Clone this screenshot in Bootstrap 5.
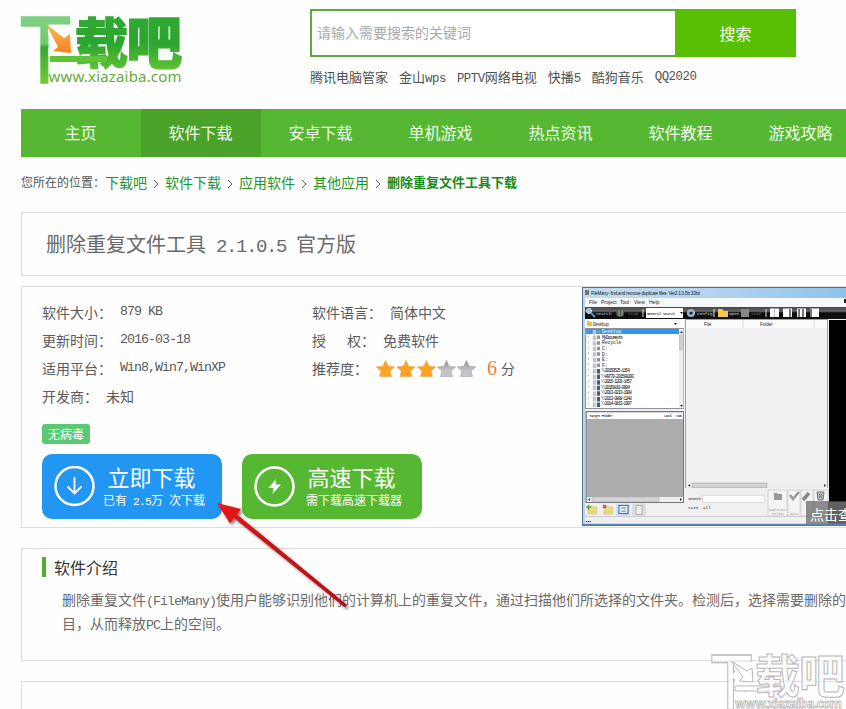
<!DOCTYPE html>
<html lang="zh-CN">
<head>
<meta charset="utf-8">
<meta name="viewport" content="width=device-width, initial-scale=1">
<title>删除重复文件工具下载</title>
<link href="https://cdn.jsdelivr.net/npm/bootstrap@5.3.0/dist/css/bootstrap.min.css" rel="stylesheet">
<style>
  body{font-family:"Noto Sans CJK SC",sans-serif;font-size:14px;color:#5a5a5a;background:#fefefe;overflow:hidden;height:709px}
  .page{padding-left:21px;height:709px;overflow:hidden}
  /* half-width latin, 0.5em per character */
  .hw{font-family:"Liberation Mono",monospace;font-size:.95em;letter-spacing:-.0737em;white-space:pre;line-height:1}
  .facts .d-flex>.hw{line-height:28px}
  .top-area{height:109px}
  .logo{width:289px}
  .search{width:486px;height:48px;margin-top:9px}
  .search .form-control{border:2px solid #5aa943;border-right:0;padding:0 5px 2px;font-size:14px;background:#fff}
  .search .form-control::placeholder{color:#a9a9a9}
  .search .btn{width:121px;background:#58bf03;color:#f4fff0;font-size:16px;padding:0;border:0}
  .hot{font-size:13px;line-height:20px;margin-top:10px;color:#505050;gap:11px}
  .hot .hw{letter-spacing:-.037em}
  .hot>.hw{line-height:20px}
  .main-nav{background:#56b832;height:48px;overflow:hidden}
  .main-nav .nav-link{width:120px;flex:none;height:48px;line-height:47px;padding:0 1px 0 0;text-align:center;color:#f0fdea;font-size:16px}
  .main-nav .nav-link.active{background:#4aa229}
  .crumbs{height:55px;line-height:20px;padding-top:15px;font-size:14px;color:#259427}
  .crumbs .where{font-size:12px;width:84px;color:#555;white-space:nowrap}
  .crumbs svg{width:18px;height:20px;flex:none}
  .crumbs b{font-size:13px;color:#168a1a}
  .panel{border:1px solid #ddd;border-right:0}
  .title-box{height:64px;margin-bottom:10px;padding-left:24px;font-size:20px;color:#6a6a6a;line-height:62px;font-weight:400}
  .info{height:242px;margin-bottom:20px;padding-left:20px}
  .facts{height:137px;padding-top:11px;line-height:28px}
  .facts .left{width:270px}
  .lbl{width:78px;flex:none}
  .safe{width:48px;height:20px;line-height:19px;background:#5bc873;border-radius:3px;color:#fff;font-size:12px;text-align:center;padding:0;font-weight:400}
  .actions{margin-top:10px;gap:20px}
  .dl{width:180px;height:65px;border-radius:10px;border:0;padding:0 0 0 12px;color:#fff;text-align:left;background:#2196f3}
  .dl.fast{background:#56b732}
  .dl:hover{color:#fff}
  .dl .big{font-size:22px;line-height:26px;margin:-2px 0 2px -5px}
  .dl .sub{font-size:12px;line-height:18px}
  .dl .cap{width:106px;text-align:center;margin-left:6px}
  .intro{height:113px;margin-bottom:20px;padding:8px 0 0 20px}
  .intro h2{font-size:16px;font-weight:400;color:#333;border-left:4px solid #52ae30;padding-left:8px;line-height:20px;height:20px;margin-bottom:10px}
  .intro p{padding-left:20px;line-height:24px;color:#6a6a6a;white-space:nowrap;margin:0}
  .last{height:60px}
  .over{position:absolute;pointer-events:none}
  .arrow{left:200px;top:490px}
  .stamp{left:706px;top:646px}
  .score{font-family:"Liberation Serif",serif;font-size:20px;color:#f08038;margin-left:9px;width:14px}
</style>
</head>
<body>
<div class="page">
  <header class="top-area d-flex">
    <div class="logo">
      <svg width="180" height="95" viewBox="21 0 180 95" overflow="visible" role="img" aria-label="下载吧">
        <defs>
          <linearGradient id="ga" x1="0" y1="0" x2="0" y2="1"><stop offset="0" stop-color="#97d5a0"/><stop offset=".5" stop-color="#6cca6c"/><stop offset=".53" stop-color="#34aa30"/><stop offset="1" stop-color="#8ad838"/></linearGradient>
          <linearGradient id="gb" x1="0" y1="0" x2="0" y2="1"><stop offset="0" stop-color="#36ad38"/><stop offset=".55" stop-color="#2aa52d"/><stop offset="1" stop-color="#70cc36"/></linearGradient>
          <linearGradient id="gc" x1="0" y1="0" x2="0" y2="1"><stop offset="0" stop-color="#fbb75b"/><stop offset="1" stop-color="#f5831f"/></linearGradient>
        </defs>
        <g font-family="Noto Sans CJK SC, sans-serif" font-weight="700" font-size="54">
          <text transform="translate(18.500 76) scale(1 1.38)" fill="url(#ga)" stroke="url(#ga)" stroke-width="1">下</text>
          <path d="M48.500 24.500V56H74V24.500Z" fill="#fefefe"/>
          <text transform="translate(75 63) scale(.98 1)" fill="url(#gb)" stroke="url(#gb)" stroke-width="2.200">载</text>
          <text transform="translate(127 62.500) scale(1.01 1.03)" fill="url(#gb)" stroke="url(#gb)" stroke-width="3">吧</text>
        </g>
        <path d="M46 24 64 38 70 34 71 53 53 51 58 47Z" fill="url(#gc)"/>
        <path d="M50 56H107V62H50Z" fill="#5ec337"/>
        <text x="48.500" y="82" font-family="Noto Sans, sans-serif" font-size="15" textLength="133" fill="#66ad36">www.xiazaiba.com</text>
      </svg>
    </div>
    <div>
      <form class="search input-group flex-nowrap" onsubmit="return false">
        <input class="form-control rounded-0 shadow-none" type="text" placeholder="请输入需要搜索的关键词" aria-label="搜索">
        <button class="btn rounded-0" type="button">搜索</button>
      </form>
      <div class="hot d-flex text-nowrap">
        <span>腾讯电脑管家</span><span>金山<span class="hw">wps</span></span><span><span class="hw">PPTV</span>网络电视</span><span>快播<span class="hw">5</span></span><span>酷狗音乐</span><span class="hw">QQ2020</span>
      </div>
    </div>
  </header>

  <nav class="main-nav nav flex-nowrap">
    <a class="nav-link">主页</a><a class="nav-link active">软件下载</a><a class="nav-link">安卓下载</a><a class="nav-link">单机游戏</a><a class="nav-link">热点资讯</a><a class="nav-link">软件教程</a><a class="nav-link">游戏攻略</a>
  </nav>

  <div class="crumbs d-flex text-nowrap">
    <span class="where">您所在的位置：</span><span>下载吧</span>
    <svg><path d="M7 8 11 12 7 16" fill="none" stroke="#666"/></svg><span>软件下载</span>
    <svg><path d="M7 8 11 12 7 16" fill="none" stroke="#666"/></svg><span>应用软件</span>
    <svg><path d="M7 8 11 12 7 16" fill="none" stroke="#666"/></svg><span>其他应用</span>
    <svg><path d="M7 8 11 12 7 16" fill="none" stroke="#666"/></svg><b>删除重复文件工具下载</b>
  </div>

  <h1 class="panel title-box">删除重复文件工具<span class="hw"> 2.1.0.5 </span>官方版</h1>

  <section class="panel info d-flex">
    <div class="flex-shrink-0">
      <div class="facts d-flex">
        <div class="left">
          <div class="d-flex"><span class="lbl">软件大小：</span><span class="hw">879 KB</span></div>
          <div class="d-flex"><span class="lbl">更新时间：</span><span class="hw">2016-03-18</span></div>
          <div class="d-flex"><span class="lbl">适用平台：</span><span class="hw">Win8,Win7,WinXP</span></div>
          <div class="d-flex"><span class="me-2">开发商：</span><span>未知</span></div>
        </div>
        <div>
          <div class="d-flex"><span class="lbl">软件语言：</span><span>简体中文</span></div>
          <div class="d-flex"><span>授<span class="hw">   </span>权：</span><span class="ms-2">免费软件</span></div>
          <div class="d-flex"><span class="me-2">推荐度：</span>
            <svg width="102" height="28" viewBox="0 0 102 28">
              <defs><path id="st" d="M0-9 2.7-3.3 9.2-2.6 4.6 1.6 6 7H-6L-4.6 1.6-9.2-2.6-2.7-3.3Z"/>
              <linearGradient id="gg" x1="0" y1="0" x2="0" y2="1"><stop offset="0" stop-color="#8c8c92"/><stop offset=".6" stop-color="#c4c4c8"/></linearGradient></defs>
              <g fill="#fba424" stroke="#e99a3a" stroke-width=".5"><use href="#st" x="9.500" y="15.500"/><use href="#st" x="30" y="15.500"/><use href="#st" x="50.500" y="15.500"/></g>
              <g fill="url(#gg)" stroke="#999" stroke-width=".5"><use href="#st" x="70.500" y="15.500"/><use href="#st" x="90.500" y="15.500"/></g>
            </svg>
            <span class="score">6</span><span>分</span></div>
        </div>
      </div>
      <div class="badge safe d-block">无病毒</div>
      <div class="actions d-flex">
        <button class="btn dl d-flex align-items-center">
          <svg width="41" height="41" viewBox="0 0 41 41" fill="none" stroke="#fff"><circle cx="20.500" cy="20" r="19" stroke-width="2.500"/><path d="M20.500 11V27M13.500 20.500 20.500 27.500 27.500 20.500" stroke-width="1.800"/></svg>
          <span class="cap"><span class="big d-block">立即下载</span><span class="sub d-block">已有<span class="hw"> 2.5</span>万<span class="hw"> </span>次下载</span></span>
        </button>
        <button class="btn dl fast d-flex align-items-center">
          <svg width="41" height="41" viewBox="0 0 41 41"><circle cx="20.500" cy="20.500" r="19" fill="none" stroke="#fff" stroke-width="2.500"/><path d="M22 13 14.500 22H19.500L18.500 28 27 18.500H21.500Z" fill="#fff"/></svg>
          <span class="cap"><span class="big d-block">高速下载</span><span class="sub d-block">需下载高速下载器</span></span>
        </button>
      </div>
    </div>
    <svg class="ms-auto flex-shrink-0" width="264" height="240" viewBox="582 287 264 240" font-family="Liberation Mono, monospace">
      <defs>
        <linearGradient id="tb" x1="0" x2="1"><stop offset="0" stop-color="#c5dcf3"/><stop offset=".5" stop-color="#b3d3ef"/><stop offset="1" stop-color="#8fc3ea"/></linearGradient>
        <linearGradient id="bk" x1="0" y1="0" x2="0" y2="1"><stop offset="0" stop-color="#444"/><stop offset=".35" stop-color="#666"/><stop offset=".5" stop-color="#090909"/><stop offset="1" stop-color="#111"/></linearGradient>
      </defs>
      <rect x="582.500" y="287.500" width="270" height="238" fill="#b9d4ee" stroke="#5b7188"/>
      <rect x="583" y="288" width="263" height="10" fill="url(#tb)"/>
      <rect x="585" y="290" width="4" height="5" fill="#777"/>
      <text x="591" y="294.500" font-family="Liberation Sans, sans-serif" font-size="4.700" textLength="109" fill="#222">FileMany -find and remove duplicate files- Ver2.1.0.5b 32bit</text>
      <rect x="585" y="298" width="261" height="226" fill="#f0eff1"/>
      <rect x="585" y="298" width="261" height="9" fill="#f7f8fb"/>
      <g font-family="Liberation Sans, sans-serif" font-size="5" fill="#222"><text x="589" y="304">File</text><text x="601" y="304">Project</text><text x="620" y="304">Tool</text><text x="634" y="304">View</text><text x="649" y="304">Help</text></g>
      <path d="M845 299V303" stroke="#222" stroke-width="2"/>
      <rect x="585" y="307" width="261" height="12" fill="url(#bk)"/>
      <circle cx="589" cy="311" r="2.500" fill="#8bc4ee" stroke="#ddd"/><path d="M591 313 595 317" stroke="#469ee0" stroke-width="2"/>
      <g font-size="4.300" fill="#ddd"><text x="596" y="315">Search</text><text x="628" y="315" fill="#777">Stop</text><text x="697" y="315">Config</text><text x="729" y="315">Open</text><text x="751" y="315" fill="#777">Save</text></g>
      <circle cx="620" cy="313" r="4" fill="#555"/><path d="M619 310V316M622 310V316" stroke="#aaa"/>
      <path d="M643 309V317M714 309V317M766 309V317" stroke="#ddd"/>
      <rect x="646" y="308" width="37" height="10" fill="#fff"/><text x="647" y="315" font-size="4.300" textLength="28" fill="#111">General search</text><path d="M680 312H683L681.500 314Z" fill="#111"/>
      <circle cx="691" cy="313" r="2.800" fill="none" stroke="#9ab2d1" stroke-width="2.500"/>
      <path d="M718 309H722L724 311H728V317H718Z" fill="#f4c84e"/><rect x="741" y="309" width="8" height="8" fill="#888"/>
      <g fill="#fff"><rect x="770" y="308.500" width="9" height="8.500"/><rect x="783" y="308.500" width="9" height="8.500"/><rect x="797" y="308.500" width="9" height="8.500"/><rect x="810" y="308.500" width="9" height="8.500"/></g>
      <path d="M774.500 309V317" stroke="#bbb"/><path d="M790 309V317M799 309V317M803 309V317M811 309V317" stroke="#777" stroke-width="2"/>
      <rect x="585" y="319" width="99" height="9" fill="#fff"/><path d="M587 321H590V322H592V326H587Z" fill="#eebc43"/><text x="593" y="325.500" font-size="4.500" textLength="16" fill="#222">Desktop</text><path d="M674 323H677L675.500 325Z" fill="#111"/>
      <rect x="585.500" y="328.500" width="98" height="80" fill="#fff" stroke="#8e9299"/>
      <rect x="586" y="329" width="93" height="5" fill="#2c98f5"/>
      <rect x="679" y="329" width="4.500" height="79" fill="#eee"/><rect x="679.500" y="335" width="4" height="15" fill="#d0d0d3" stroke="#aaa" stroke-width=".5"/>
      <path d="M680 333 681.500 331 683 333M680 405 681.500 407 683 405" fill="#333"/>
      <path d="M588.500 330V408" stroke="#aaa" stroke-width="1" stroke-dasharray="1.500 4.100"/>
      <path d="M594.500 330V408" stroke="#c5c5c5" stroke-width="3.500" stroke-dasharray="4.500 1.080"/>
      <path d="M598.500 369V408" stroke="#3c5d91" stroke-width="3" stroke-dasharray="4.500 1.080"/>
      <path d="M598.500 330V368" stroke="#8795a3" stroke-width="3" stroke-dasharray="3.500 2.080"/>
      <g font-size="4.600" fill="#111">
        <text x="602" y="333.200" fill="#fff">Desktop</text><text x="602" y="338.800" textLength="21">MyDocuments</text><text x="602" y="344.400">Recycle</text><text x="602" y="350">C:</text><text x="602" y="355.600">D:</text><text x="602" y="361.200">E:</text><text x="602" y="366.700">F:</text>
        <text x="601" y="372.200" textLength="29">\\20150525-1154</text><text x="601" y="377.700" textLength="33">\\49770-201508200</text><text x="601" y="383.200" textLength="31">\\2015-1203-1657</text><text x="601" y="388.700" textLength="29">\\20150810-0904</text><text x="601" y="394.200" textLength="31">\\2013-0213-1908</text><text x="601" y="399.700" textLength="31">\\2013-0808-1248</text><text x="601" y="405.200" textLength="31">\\2014-0813-1907</text>
      </g>
      <rect x="586" y="411.500" width="97.500" height="91" fill="#adacad" stroke="#777"/><rect x="587" y="412.500" width="96" height="6.500" fill="#fff"/>
      <g font-size="4.300" fill="#111"><text x="589" y="417" textLength="24">Target Folder</text><text x="664" y="417" textLength="8">Lock</text><text x="676" y="417" textLength="6">Sub</text></g>
      <rect x="587" y="497" width="96" height="5" fill="#eee"/><rect x="592" y="497" width="67" height="4.500" fill="#d4d4d6" stroke="#aaa" stroke-width=".5"/><path d="M590 498V501L588 499.500ZM680 498V501L682 499.500Z" fill="#333"/>
      <rect x="685.500" y="319.500" width="142" height="168" fill="#f0eff1" stroke="#a2a2a5"/>
      <rect x="686" y="320" width="141" height="8" fill="#fbfbfc"/>
      <g font-size="4.500" fill="#222" font-family="Liberation Sans, sans-serif"><text x="704" y="326">File</text><text x="760" y="326">Folder</text></g><path d="M743 320V328M814 320V328" stroke="#ddd"/>
      <rect x="686" y="483" width="141" height="5" fill="#eee"/><rect x="692" y="483" width="75" height="4.500" fill="#d2d2d5" stroke="#999" stroke-width=".5"/><path d="M690 484V487L688 485.500ZM824 484V487L826 485.500Z" fill="#333"/>
      <rect x="829" y="320" width="17" height="182" fill="#000"/>
      <g font-size="4.300" fill="#222"><text x="688" y="500" textLength="13">Search</text><text x="688" y="509">Size</text><text x="703" y="509">all</text></g>
      <rect x="702.500" y="495.500" width="62" height="7" fill="#fff" stroke="#ccc" stroke-width=".6"/>
      <g fill="#f4f4f5" stroke="#c5c5c7" stroke-width=".7"><rect x="768" y="490" width="19" height="26"/><rect x="788" y="490" width="12" height="26"/><rect x="801" y="490" width="12" height="26"/><rect x="814" y="490" width="14" height="26"/></g>
      <path d="M774 493H777L778 494H782V500H774Z" fill="#999"/><path d="M790 495 793 499 799 492" fill="none" stroke="#999" stroke-width="2.500"/><path d="M803 500 809 493" stroke="#888" stroke-width="3.500"/><path d="M817 492H824L823 500H818Z" fill="#bbb" stroke="#777"/><path d="M819 494 822 498M822 494 819 498" stroke="#777"/>
      <g font-size="3.500" fill="#999"><text x="769" y="510.500" textLength="17">Duplicate</text><text x="772" y="515">Folder</text><text x="790" y="515">Auto</text></g>
      <path d="M588 506H592L593 507H597V514H588ZM604 506H608L609 507H613V514H604Z" fill="#ebd77c" stroke="#c8b96f" stroke-width=".5"/><path d="M586 507H591M588.500 505V510" stroke="#58a63b" stroke-width="1.500"/><path d="M603 505 606 508M606 505 603 508" stroke="#d6482d" stroke-width="1.500"/><rect x="616" y="503.500" width="14" height="13" fill="#cfe1f5"/><rect x="619" y="505.500" width="9" height="8" fill="#fff" stroke="#3574bb" stroke-width="1.200"/><path d="M621 508H626M621 511H626" stroke="#3574bb"/><rect x="632" y="503.500" width="14" height="13" fill="#ddd"/><rect x="636" y="505.500" width="6" height="9" fill="#eee" stroke="#999" stroke-width=".7"/>
      <path d="M585 516.500H827" stroke="#ccc"/><path d="M586 521.500H591" stroke="#222" stroke-dasharray="1.300 .6"/>
      <rect x="828" y="502" width="18" height="22" fill="#777"/>
      <rect x="806" y="501" width="40" height="24" fill="#555" fill-opacity=".65"/>
      <text x="810" y="520" font-family="Noto Sans CJK SC, sans-serif" font-size="14" fill="#fff">点击查</text>
      <path d="M583 524.500H846" stroke="#5f87b4" stroke-width="1.500"/>
    </svg>
  </section>

  <section class="panel intro">
    <h2>软件介绍</h2>
    <p>删除重复文件<span class="hw">(FileMany)</span>使用户能够识别他们的计算机上的重复文件，通过扫描他们所选择的文件夹。检测后，选择需要删除的<br>目，从而释放<span class="hw">PC</span>上的空间。</p>
  </section>
  <section class="panel last"></section>
</div>

<svg class="over arrow" width="160" height="130" viewBox="200 490 160 130">
  <defs><linearGradient id="ar" x1="0" x2="1"><stop offset="0" stop-color="#f01512"/><stop offset=".35" stop-color="#c51414"/><stop offset="1" stop-color="#b30f12"/></linearGradient>
  <filter id="sh" x="-20%" y="-20%" width="150%" height="150%"><feDropShadow dx="2" dy="2" stdDeviation="1.800" flood-color="#000" flood-opacity=".5"/></filter></defs>
  <path d="M217 503 241 509 237 514.500 347 605 345 607.500 234 518 230 523.500Z" fill="url(#ar)" filter="url(#sh)"/>
</svg>
<svg class="over stamp" width="140" height="63" viewBox="706 646 140 63">
  <g font-family="Noto Sans CJK SC, sans-serif" font-weight="700" font-size="45" fill="#fefefe" fill-opacity=".6" stroke="#b8b8b8" stroke-width="1">
    <text transform="translate(709.500 704) scale(.98 1.38)">下</text>
    <path d="M735 662H754V690H735Z" fill-opacity="1" stroke="none"/>
    <path d="M731 661 747 671 752 668 753 682 739 681 743 677Z" fill-opacity="1"/>
    <path d="M735 686H781V691H735Z"/>
    <text x="755" y="693">载</text><text transform="translate(799 693) scale(1.02 1.03)">吧</text>
    <text x="735" y="708" font-family="Noto Sans, sans-serif" font-size="12.500" textLength="107" stroke-width=".8">www.xiazaiba.com</text>
  </g>
</svg>
<script src="https://cdn.jsdelivr.net/npm/bootstrap@5.3.0/dist/js/bootstrap.bundle.min.js"></script>
</body>
</html>
